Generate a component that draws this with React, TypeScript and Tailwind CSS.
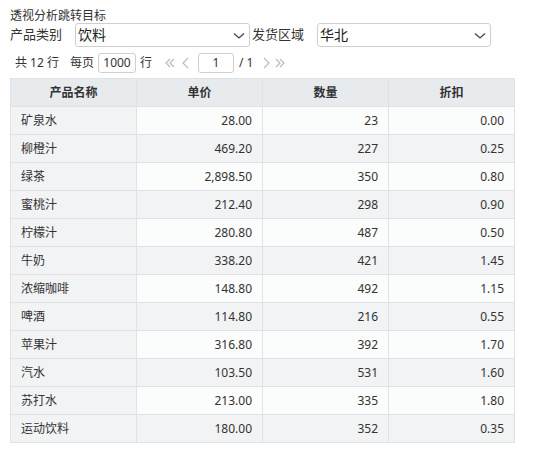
import React from "react";

const rows: [string, string, string, string][] = [
  ["矿泉水", "28.00", "23", "0.00"],
  ["柳橙汁", "469.20", "227", "0.25"],
  ["绿茶", "2,898.50", "350", "0.80"],
  ["蜜桃汁", "212.40", "298", "0.90"],
  ["柠檬汁", "280.80", "487", "0.50"],
  ["牛奶", "338.20", "421", "1.45"],
  ["浓缩咖啡", "148.80", "492", "1.15"],
  ["啤酒", "114.80", "216", "0.55"],
  ["苹果汁", "316.80", "392", "1.70"],
  ["汽水", "103.50", "531", "1.60"],
  ["苏打水", "213.00", "335", "1.80"],
  ["运动饮料", "180.00", "352", "0.35"],
];

const font = { fontFamily: '"Noto Sans", "Noto Sans CJK SC", sans-serif' };

function Chevron() {
  return (
    <svg width="12" height="8" viewBox="0 0 12 8" className="absolute right-[4px] top-[8px]">
      <polyline points="1,1.5 6,6 11,1.5" fill="none" stroke="#444" strokeWidth="1.3" />
    </svg>
  );
}

function Select({ value, width }: { value: string; width: string }) {
  return (
    <div className={`relative h-[24px] ${width} rounded-[3px] border border-[#cfcfcf] bg-white pl-[2px] text-[14px] leading-[22px] text-[#222]`}>
      {value}
      <Chevron />
    </div>
  );
}

function DoubleLeft() {
  return (
    <svg width="11" height="10" viewBox="0 0 11 10">
      <polyline points="5,1 1,5 5,9" fill="none" stroke="#bbb" strokeWidth="1.2" />
      <polyline points="9,1 5,5 9,9" fill="none" stroke="#bbb" strokeWidth="1.2" />
    </svg>
  );
}
function DoubleRight() {
  return (
    <svg width="11" height="10" viewBox="0 0 11 10">
      <polyline points="2,1 6,5 2,9" fill="none" stroke="#bbb" strokeWidth="1.2" />
      <polyline points="6,1 10,5 6,9" fill="none" stroke="#bbb" strokeWidth="1.2" />
    </svg>
  );
}
function Left() {
  return (
    <svg width="7" height="12" viewBox="0 0 7 12">
      <polyline points="6,1 1,6 6,11" fill="none" stroke="#bbb" strokeWidth="1.2" />
    </svg>
  );
}
function Right() {
  return (
    <svg width="7" height="12" viewBox="0 0 7 12">
      <polyline points="1,1 6,6 1,11" fill="none" stroke="#bbb" strokeWidth="1.2" />
    </svg>
  );
}

export default function App() {
  return (
    <div className="w-[553px] h-[468px] bg-white pl-[10px] pt-[8px] text-[#333]" style={font}>
      <div className="h-[15px] text-[12px] leading-[15px] text-[#333]">透视分析跳转目标</div>
      <div className="flex h-[24px] items-center text-[13px] text-[#333]">
        <div className="w-[65px]">产品类别</div>
        <Select value="饮料" width="w-[175px]" />
        <div className="ml-[2px] w-[65px]">发货区域</div>
        <Select value="华北" width="w-[174px]" />
      </div>
      <div className="mt-[6px] flex h-[20px] items-center text-[12px] text-[#333]">
        <div className="ml-[5px] w-[55px]">共 12 行</div>
        <div className="w-[28px]">每页</div>
        <div className="flex h-[20px] w-[38px] items-center justify-center rounded-[3px] border border-[#cfcfcf]">1000</div>
        <div className="ml-[4px] w-[25px]">行</div>
        <DoubleLeft />
        <div className="ml-[6px]"><Left /></div>
        <div className="ml-[9px] flex h-[20px] w-[36px] items-center justify-center rounded-[3px] border border-[#cfcfcf]">1</div>
        <div className="ml-[5px] w-[24px]">/ 1</div>
        <Right />
        <div className="ml-[4px]"><DoubleRight /></div>
      </div>
      <table className="mt-[5px] border-collapse text-[12px] text-[#333]">
        <thead>
          <tr className="h-[28px] bg-[#e8ebee]">
            {["产品名称", "单价", "数量", "折扣"].map((h) => (
              <th key={h} className="w-[126px] border border-[#dfe3e6] p-0 text-center font-bold">{h}</th>
            ))}
          </tr>
        </thead>
        <tbody>
          {rows.map((r, i) => {
            const bg = i % 2 === 0 ? "bg-[#fbfcfc]" : "bg-[#f1f3f5]";
            return (
              <tr key={r[0]} className="h-[28px]">
                <td className="border border-[#dfe3e6] bg-[#f1f3f5] pl-[10px]">{r[0]}</td>
                <td className={`border border-[#dfe3e6] ${bg} pr-[10px] text-right`}>{r[1]}</td>
                <td className={`border border-[#dfe3e6] ${bg} pr-[10px] text-right`}>{r[2]}</td>
                <td className={`border border-[#dfe3e6] ${bg} pr-[10px] text-right`}>{r[3]}</td>
              </tr>
            );
          })}
        </tbody>
      </table>
    </div>
  );
}
